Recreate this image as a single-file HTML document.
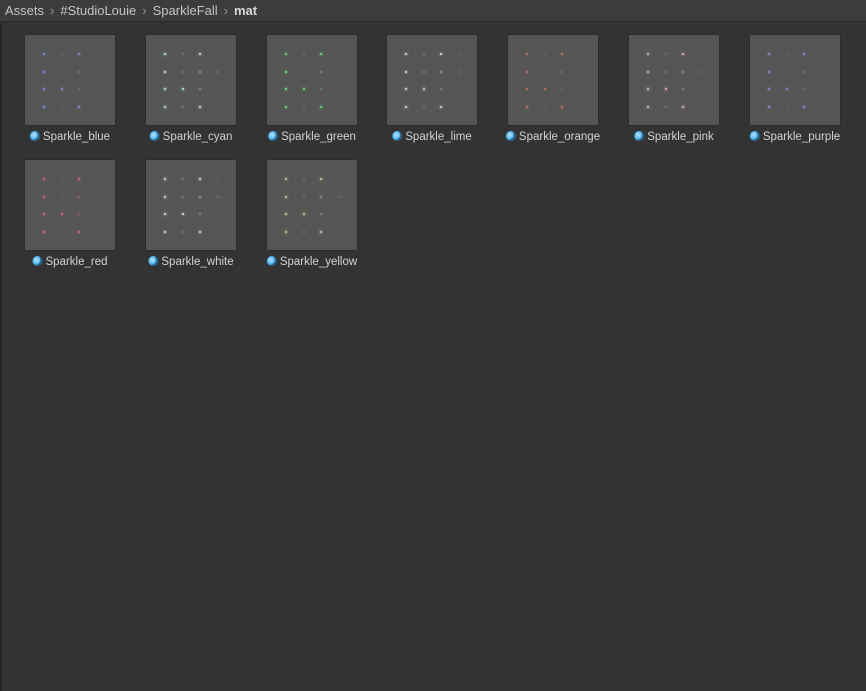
<!DOCTYPE html>
<html><head><meta charset="utf-8"><style>
html,body{margin:0;padding:0;width:866px;height:691px;overflow:hidden;background:#333;font-family:"Liberation Sans",sans-serif}
.bar{position:absolute;left:0;top:0;width:866px;height:22px;background:#3c3c3c;border-bottom:1px solid #2a2a2a;color:#c4c4c4;font-size:13px;line-height:22px;padding-left:5px;box-sizing:border-box;white-space:nowrap}
.bar i{font-style:normal;color:#999;margin:0 6px}
.bar b{color:#d8d8d8}
.edge{position:absolute;left:0;top:23px;width:2px;height:668px;background:#262626}
.item{position:absolute;width:121px;height:125px}
.th{position:absolute;left:0;top:0;width:92px;height:92px;background:#555;border:1px solid #2c2c2c;box-sizing:border-box}
.d{position:absolute;width:2px;height:2px;border-radius:50%}
.lb{position:absolute;top:96px;left:46px;transform:translateX(-50%);white-space:nowrap;color:#d2d2d2;font-size:11.5px;line-height:14px}
.ic{display:inline-block;width:10px;height:10px;border-radius:50%;background:radial-gradient(circle at 40% 40%,#bfe8ff 0,#4fb3f0 45%,#1a5f96 100%);vertical-align:-1px;margin-right:3px;box-shadow:inset -2px -1px 0 #2a5e86}
</style></head><body>
<div class="bar">Assets<i>&#x203A;</i>#StudioLouie<i>&#x203A;</i>SparkleFall<i>&#x203A;</i><b>mat</b></div>
<div class="edge"></div>
<div id="g"></div>
<script>
var items=[["blue","#8a98ff"],["cyan","#d0fcff"],["green","#70ff80"],["lime","#e8ffd8"],["orange","#d9786a"],["pink","#ffc7e3"],["purple","#b28bff"],["red","#ff6a8a"],["white","#f2f2f2"],["yellow","#e8e3a8"]];
var pat=[[.85,.2,.85,.08],[.85,.2,.4,.15],[.85,.85,.3,0],[.85,.2,.85,.06]];
var h="";
items.forEach(function(it,i){
 var c=i%7,r=Math.floor(i/7);
 var x=Math.round(24+c*120.8),y=34+r*125;
 h+='<div class="item" style="left:'+x+'px;top:'+y+'px"><div class="th">';
 var xs=[19,37,54,72],ys=[19,37,54,72];
 for(var a=0;a<4;a++)for(var b=0;b<4;b++){var o=pat[a][b];if(!o)continue;
  h+='<div class="d" style="left:'+(xs[b]-1)+'px;top:'+(ys[a]-1)+'px;background:'+it[1]+';opacity:'+o+';box-shadow:0 0 2px 1px '+it[1]+'55"></div>';}
 h+='</div><div class="lb"><span class="ic"></span>Sparkle_'+it[0]+'</div></div>';
});
document.getElementById("g").innerHTML=h;
</script>
</body></html>
